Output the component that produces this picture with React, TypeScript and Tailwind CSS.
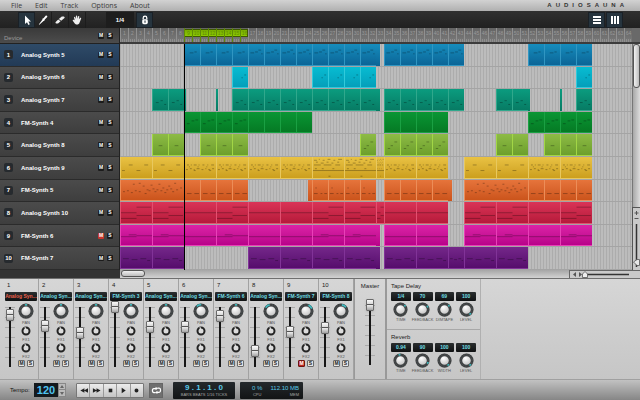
import { useState } from "react";
import clsx from "clsx";

const MEASURES = 64;

type Notes = [number, number, number][];

// note patterns on a 32 x 22 grid: x, y, length
const NOTES: Record<string, Notes> = {
  none: [],
  blue: [[10, 9, 8], [20, 8, 5]],
  blueDense: [[3, 9, 8], [13, 8, 6], [20, 6, 6], [26, 10, 3]],
  cyan: [[24, 8, 4], [18, 11, 3]],
  teal: [[6, 14, 6], [16, 12, 5], [24, 16, 4]],
  green: [[4, 12, 6], [14, 9, 6], [22, 8, 6]],
  lime: [[12, 12, 8]],
  limeDense: [[6, 15, 5], [12, 12, 5], [20, 8, 6]],
  yellow: [[8, 8, 4], [24, 8, 4], [1, 14, 3], [16, 14, 4]],
  yellowDense: [
    [2, 8, 2], [6, 8, 1], [9, 8, 3], [14, 8, 1], [18, 8, 2], [23, 8, 1], [27, 8, 3],
    [1, 13, 2], [5, 12, 2], [9, 13, 1], [12, 12, 3], [17, 13, 2], [21, 12, 1], [24, 13, 2], [28, 12, 2],
    [4, 10, 1], [13, 10, 1], [22, 10, 1], [9, 14, 2], [25, 14, 2],
  ],
  yellowFull: [
    [1, 3, 3], [6, 2, 1], [10, 3, 2], [15, 2, 3], [21, 3, 2], [26, 2, 4],
    [3, 5, 2], [8, 6, 3], [14, 5, 2], [19, 6, 2], [25, 5, 2], [1, 8, 7], [11, 8, 8], [23, 8, 5],
    [2, 12, 2], [9, 12, 2], [20, 12, 2], [0, 14, 32], [16, 20, 2],
  ],
  orange: [[2, 14, 8], [16, 14, 4], [24, 14, 6], [5, 8, 3]],
  orangeLow: [[4, 14, 10], [20, 14, 10]],
  orangeScatter: [
    [1, 12, 1], [3, 11, 1], [5, 13, 1], [6, 4, 1], [7, 11, 1], [9, 3, 1], [9, 12, 1], [11, 6, 1], [12, 14, 1],
    [13, 10, 1], [14, 11, 1], [15, 5, 1], [16, 9, 1], [17, 12, 1], [18, 10, 1], [19, 4, 1], [20, 11, 1],
    [21, 8, 1], [22, 13, 1], [23, 10, 1], [24, 6, 1], [25, 9, 1], [26, 12, 1], [27, 3, 1], [28, 10, 1], [30, 8, 1],
  ],
  red: [[16, 5, 15], [0, 11, 16], [16, 14, 15], [0, 17, 16]],
  redFlat: [[0, 11, 32]],
  magenta: [[8, 10, 8], [0, 12, 16], [16, 11, 8], [24, 11, 8]],
  magentaFlat: [[0, 12, 32]],
  purple: [[2, 12, 6], [11, 13, 6], [20, 12, 6], [27, 14, 3]],
};

// run of clips: first measure, last measure, measures in one clip, notes
type Run = [number, number, number, string];

type Track = {
  name: string;
  color: string;
  muted?: boolean;
  runs: Run[];
};

const TRACKS: Track[] = [
  {
    name: "Analog Synth 5",
    color: "from-[#168dbd] to-[#0b6597] border-[#3096c2]",
    runs: [[8, 16, 2, "blue"], [16, 32.5, 2, "blueDense"], [33, 43, 2, "blueDense"], [51, 59, 2, "blue"]],
  },
  {
    name: "Analog Synth 6",
    color: "from-[#08bcd2] to-[#049fba] border-[#30cadb]",
    runs: [[14, 16, 2, "cyan"], [24, 32, 2, "cyan"], [57, 59, 2, "cyan"]],
  },
  {
    name: "Analog Synth 7",
    color: "from-[#0b9c7f] to-[#077b64] border-[#30a88c]",
    runs: [
      [4, 8, 2, "teal"], [8, 8.25, 1, "none"], [12, 12.25, 1, "none"], [14, 32.5, 2, "teal"],
      [33, 43, 2, "teal"], [47, 51.25, 2, "teal"], [55, 55.25, 1, "none"], [57, 59, 2, "teal"],
    ],
  },
  {
    name: "FM-Synth 4",
    color: "from-[#0a9634] to-[#057a24] border-[#1aa043]",
    runs: [[8, 16, 2, "green"], [16, 24, 2, "none"], [33, 41, 2, "none"], [51, 59, 2, "green"]],
  },
  {
    name: "Analog Synth 8",
    color: "from-[#8dbb45] to-[#6d9f2c] border-[#a2d646]",
    runs: [[4, 8, 2, "lime"], [10, 16, 2, "lime"], [30, 32, 2, "limeDense"], [33, 41, 2, "limeDense"], [47, 51, 2, "lime"], [53, 59, 2, "lime"]],
  },
  {
    name: "Analog Synth 9",
    color: "from-[#e9c243] to-[#cc9f1c] border-[#e8c85e]",
    runs: [
      [0, 8, 4, "yellow"], [8, 24, 4, "yellowDense"], [24, 33, 4, "yellowFull"],
      [33, 41, 4, "yellowDense"], [43, 51, 4, "yellow"], [51, 59, 4, "yellowDense"],
    ],
  },
  {
    name: "FM-Synth 5",
    color: "from-[#e6743b] to-[#cb541b] border-[#ec8d58]",
    runs: [
      [0, 8, 8, "orangeScatter"], [8, 16, 2, "orangeLow"], [23.5, 24, 1, "none"], [24, 32, 2, "orange"],
      [33, 41, 2, "orangeLow"], [41, 41.5, 1, "none"], [43, 51, 8, "orangeScatter"], [51, 59, 2, "orangeLow"],
    ],
  },
  {
    name: "Analog Synth 10",
    color: "from-[#da3357] to-[#b61a3a] border-[#e25070]",
    runs: [
      [0, 8, 4, "red"], [8, 12, 4, "redFlat"], [12, 16, 4, "red"], [16, 24, 4, "redFlat"], [24, 33, 4, "red"],
      [33, 41, 4, "redFlat"], [43, 51, 4, "red"], [51, 55, 4, "redFlat"], [55, 59, 4, "red"],
    ],
  },
  {
    name: "FM-Synth 6",
    color: "from-[#dc22a6] to-[#b8028a] border-[#e840b8]",
    muted: true,
    runs: [
      [0, 8, 4, "magenta"], [8, 12, 4, "magentaFlat"], [12, 16, 4, "magenta"], [16, 24, 4, "magentaFlat"],
      [24, 32.5, 4, "magenta"], [33, 41, 4, "magentaFlat"], [43, 51, 4, "magenta"], [51, 55, 4, "magentaFlat"], [55, 59, 4, "magenta"],
    ],
  },
  {
    name: "FM-Synth 7",
    color: "from-[#75278a] to-[#560c6c] border-[#813398]",
    runs: [[0, 8, 4, "purple"], [16, 32.5, 4, "purple"], [33, 41, 4, "purple"], [41, 43, 2, "purple"], [43, 51, 4, "purple"]],
  },
];

const CHANNELS = [
  { name: "Analog Syn...", level: 85, pan: 0, armed: true },
  { name: "Analog Syn...", level: 65, pan: 0 },
  { name: "Analog Syn...", level: 51, pan: 0 },
  { name: "FM-Synth 3", level: 100, pan: 0 },
  { name: "Analog Syn...", level: 63, pan: 0 },
  { name: "Analog Syn...", level: 63, pan: -20 },
  { name: "FM-Synth 6", level: 83, pan: 0 },
  { name: "Analog Syn...", level: 18, pan: -35 },
  { name: "FM-Synth 7", level: 54, pan: 45, muted: true },
  { name: "FM-Synth 8", level: 61, pan: 30 },
];

const EFFECTS = [
  {
    title: "Tape Delay",
    params: [
      { label: "TIME", value: "1/4", angle: 50 },
      { label: "FEEDBACK", value: "70", angle: 60 },
      { label: "DIMTAPE", value: "69", angle: 50 },
      { label: "LEVEL", value: "100", angle: 140 },
    ],
  },
  {
    title: "Reverb",
    params: [
      { label: "TIME", value: "0.94", angle: -10 },
      { label: "FEEDBACK", value: "90", angle: 115 },
      { label: "WIDTH", value: "100", angle: 140 },
      { label: "LEVEL", value: "100", angle: 140 },
    ],
  },
];

function clipsOf(runs: Run[]) {
  const clips: { start: number; size: number; notes: string }[] = [];
  for (const [from, to, step, notes] of runs) {
    for (let m = from; m < to; m += step) {
      clips.push({ start: m, size: Math.min(step, to - m), notes });
    }
  }
  return clips;
}

function Clip({ start, size, notes, color }: { start: number; size: number; notes: string; color: string }) {
  return (
    <div
      className={clsx("absolute inset-y-0 overflow-hidden bg-linear-to-b", size >= 1 && "border-l border-b", color)}
      style={{ left: `${(start / MEASURES) * 100}%`, width: `${(size / MEASURES) * 100}%` }}
    >
      {size >= 1 && (
        <svg viewBox="0 0 32 22" preserveAspectRatio="none" className="block size-full">
          {NOTES[notes].map(([x, y, w], i) => (
            <rect key={i} x={x} y={y} width={w} height="1" fill="#000" opacity="0.3" />
          ))}
        </svg>
      )}
    </div>
  );
}

function HeaderButton({ label, name, on }: { label: string; name: string; on?: boolean }) {
  return (
    <button
      aria-label={name}
      className={clsx(
        "flex size-[6px] items-center justify-center rounded-[1px] text-[5px] leading-none font-bold text-white",
        on ? "bg-[#c8352c]" : "bg-[#1c1c1c]"
      )}
    >
      {label}
    </button>
  );
}

function Knob({ label, size, angle, arc }: { label: string; size: "lg" | "md" | "sm"; angle: number; arc?: boolean }) {
  return (
    <span
      className={clsx(
        "relative block shrink-0",
        size === "lg" && "size-4",
        size === "md" && "size-[15px]",
        size === "sm" && "size-[10px]"
      )}
    >
      <svg viewBox="0 0 16 16" className="block size-full">
        {size === "sm" ? (
          <>
            <circle cx="8" cy="8" r="5.6" fill="#dcdcdc" stroke="#232323" strokeWidth="3.2" />
            <path d="M8 6V1.6" stroke="#e8e8e8" strokeWidth="1.8" transform={`rotate(${angle} 8 8)`} />
          </>
        ) : (
          <>
            <circle cx="8" cy="8.3" r="7.6" fill="#8a8a8a" />
            <circle cx="8" cy="8" r="6" fill="url(#knobFace)" stroke="#3c3f40" strokeWidth="2.8" />
            <circle cx="8" cy="8" r="6" fill="none" stroke="#8a8d8e" strokeWidth="1.6" strokeDasharray="0.5 1.2" opacity="0.35" />
            <path
              d={arc ? "M5.6 2.2A6.2 6.2 0 0 1 10.4 2.2" : "M7 1.9A6.2 6.2 0 0 1 9 1.9"}
              fill="none"
              stroke="#3fb9bd"
              strokeWidth="1.8"
              transform={`rotate(${angle} 8 8)`}
            />
          </>
        )}
      </svg>
      <input
        type="range"
        aria-label={label}
        min={-150}
        max={150}
        defaultValue={angle}
        className="absolute inset-0 size-full cursor-pointer opacity-0"
      />
    </span>
  );
}

function Fader({ label, value }: { label: string; value: number }) {
  return (
    <input
      type="range"
      aria-label={label}
      defaultValue={value}
      className="h-[66px] w-[10px] shrink-0 cursor-pointer appearance-none bg-transparent bg-[linear-gradient(90deg,transparent_4px,#171717_4px,#171717_6px,transparent_6px),repeating-linear-gradient(180deg,#aaa_0px,#aaa_1px,transparent_1px,transparent_10px)] bg-[length:100%_60px] bg-bottom bg-no-repeat [direction:rtl] [writing-mode:vertical-lr] [&::-webkit-slider-thumb]:h-[12px] [&::-webkit-slider-thumb]:w-[8px] [&::-webkit-slider-thumb]:appearance-none [&::-webkit-slider-thumb]:rounded-[1px] [&::-webkit-slider-thumb]:border [&::-webkit-slider-thumb]:border-[#6a6a6a] [&::-webkit-slider-thumb]:bg-[linear-gradient(180deg,#fafafa_0px,#d8d8d8_4px,#555_4px,#555_5px,#eee_5px,#a4a4a4_10px)] [&::-webkit-slider-thumb]:shadow-sm"
    />
  );
}

function Display({ children, className }: { children: React.ReactNode; className?: string }) {
  return (
    <output
      className={clsx(
        "block overflow-hidden rounded-[1px] bg-linear-to-b from-[#2b2f30] to-[#101213] text-center text-[5px] leading-[9px] font-bold whitespace-nowrap text-[#6fdfe4]",
        className
      )}
    >
      {children}
    </output>
  );
}

function StripButton({ label, name, on }: { label: string; name: string; on?: boolean }) {
  return (
    <button
      aria-label={name}
      className={clsx(
        "flex size-[7px] items-center justify-center rounded-[1px] border text-[5px] leading-none font-bold",
        on ? "border-[#6e1511] bg-[#c02a20] text-white" : "border-[#6b6b6b] bg-[#e4e4e4] text-[#222]"
      )}
    >
      {label}
    </button>
  );
}

function MenuBar() {
  return (
    <header className="flex h-[11px] shrink-0 items-center justify-between bg-linear-to-b from-[#d2d2d2] to-[#b0b0b0] pr-3 pl-[11px]">
      <nav className="flex gap-[13px] font-['Open_Sans',sans-serif] text-[7px] leading-[11px] text-[#3c3c3c]">
        {["File", "Edit", "Track", "Options", "About"].map((item) => (
          <a key={item} href="#">{item}</a>
        ))}
      </nav>
      <span className="text-[6px] leading-[11px] font-bold tracking-[4px] text-[#333]">AUDIOSAUNA</span>
    </header>
  );
}

const TOOL = "flex h-[16px] w-[17px] items-center justify-center border-r border-[#1c1c1c] bg-linear-to-b from-[#303030] to-[#202020]";
const TOOL_ON = "flex h-[16px] w-[17px] items-center justify-center border border-[#1a2026] bg-[#26343e]";

function Toolbar() {
  const [tool, setTool] = useState("Select");
  const icons = [
    { name: "Select", art: <path d="M3 0.5V9L5 7.2L6.4 10L7.8 9.3L6.4 6.6H9Z" fill="#fff" /> },
    { name: "Draw", art: <path d="M0.8 9.4L4.5 4.6L5.8 5.8L1.3 9.8ZM4.6 3.6L5.5 3.3L7.6 0.8C8.6 0 10 1.3 9 2.3L6.8 4.4L6.5 5.6L5.8 5.9L4.3 4.3Z" fill="#fff" /> },
    { name: "Erase", art: <path d="M0.4 7.2L3.2 4.6L5.6 6.2L3 8.6H0.9ZM3.8 4L6.8 1.6H9L9.8 2.8L6.2 5.7Z" fill="#eee" /> },
    { name: "Pan", art: <path d="M2.6 5.2L2 2.4C1.9 1.5 3 1.4 3.2 2.2L3.8 4L3.9 1.2C3.9 0.3 5.1 0.3 5.2 1.2L5.4 3.8L6.1 1.5C6.4 0.7 7.5 1 7.3 1.9L6.9 4.3L8 3C8.6 2.3 9.5 2.9 9.1 3.7L7.6 7.6C7.2 9 6.3 9.6 5 9.6C3.6 9.6 2.9 9 2.2 7.8L0.8 5.8C0.4 5 1.3 4.4 1.9 4.9Z" fill="#eee" /> },
  ];

  return (
    <div className="flex h-[17px] shrink-0 items-center bg-linear-to-b from-[#303030] to-[#212121] pr-[17px] pl-[18px]">
      {icons.map(({ name, art }) => (
        <button key={name} aria-label={name} onClick={() => setTool(name)} className={tool === name ? TOOL_ON : TOOL}>
          <svg viewBox="0 0 10 10" className="size-[10px]">{art}</svg>
        </button>
      ))}
      <select
        aria-label="Snap"
        className="ml-5 h-[16px] w-[28px] appearance-none bg-[#1d1d1d] text-center text-[6px] leading-[16px] font-bold text-white"
      >
        <option>1/4</option>
        <option>1/8</option>
      </select>
      <button aria-label="Lock" className={clsx(TOOL_ON, "ml-[2px]")}>
        <svg viewBox="0 0 10 10" className="size-[10px]">
          <path d="M3.2 4.5V3C3.2 0.6 6.8 0.6 6.8 3V4.5" fill="none" stroke="#fff" strokeWidth="1.3" />
          <rect x="2.2" y="4.2" width="5.6" height="5" rx="1.6" fill="#fff" />
          <path d="M5 5.6V7.8" stroke="#26343e" strokeWidth="1.1" />
        </svg>
      </button>
      <div className="ml-auto flex">
        <button aria-label="List view" className={TOOL_ON}>
          <svg viewBox="0 0 10 10" className="size-[10px]">
            <path d="M1 2H9M1 5H9M1 8H9" stroke="#fff" strokeWidth="2" />
          </svg>
        </button>
        <button aria-label="Mixer view" className={clsx(TOOL_ON, "ml-px")}>
          <svg viewBox="0 0 10 10" className="size-[10px]">
            <path d="M2 1V9M5 1V9M8 1V9" stroke="#fff" strokeWidth="2" />
          </svg>
        </button>
      </div>
    </div>
  );
}

function TrackList() {
  return (
    <div className="flex w-[120px] shrink-0 flex-col border-r border-[#222] bg-[#333]">
      <div className="flex h-4 shrink-0 items-center gap-[3px] border-b border-[#222] bg-linear-to-b from-[#3a3a3a] to-[#4c4c4c] pr-[6px] pl-1">
        <span className="mr-auto pt-1 text-[6px] leading-[8px] text-[#999]">Device</span>
        <HeaderButton label="M" name="Mute all" />
        <HeaderButton label="S" name="Solo all" />
      </div>
      {TRACKS.map((track, i) => (
        <div
          key={track.name}
          className={clsx(
            "flex flex-1 items-center gap-[3px] border-b border-[#2b2b2b] bg-linear-to-b pr-[6px] pl-1",
            i === 0 ? "from-[#2f4b68] to-[#223a56]" : "from-[#4b4b4b] to-[#3e3e3e]"
          )}
        >
          <span className="flex size-[9px] items-center justify-center rounded-[2px] bg-[#262a2e] text-[6px] leading-none font-bold text-white">
            {i + 1}
          </span>
          <span className="mr-auto pl-[5px] text-[6px] leading-[8px] font-bold whitespace-nowrap text-white">{track.name}</span>
          <HeaderButton label="M" name={`Mute ${track.name}`} on={track.muted} />
          <HeaderButton label="S" name={`Solo ${track.name}`} />
        </div>
      ))}
    </div>
  );
}

function Timeline() {
  return (
    <div className="flex min-w-0 flex-1 flex-col">
      <div className="relative grid h-4 shrink-0 grid-cols-[repeat(64,minmax(0,1fr))] border-b-2 border-[#3c3c3c] bg-linear-to-b from-[#646464] to-[#7a7a7a]">
        <div
          className="absolute top-px h-[8px] border border-[#3f5a00] bg-linear-to-b from-[#78ae00] to-[#8ccb00]"
          style={{ left: `${(8 / MEASURES) * 100}%`, width: `${(8 / MEASURES) * 100}%` }}
        />
        {Array.from({ length: MEASURES }, (_, i) => (
          <span
            key={i}
            className={clsx(
              "relative overflow-hidden border-l bg-[repeating-linear-gradient(90deg,transparent_0px,transparent_1px,#8e8e8e_1px,#8e8e8e_2px)] bg-[length:100%_3px] bg-bottom bg-no-repeat text-center text-[5px] leading-[10px]",
              i >= 8 && i < 16 ? "border-[#5f8a08] text-[#5f8a08]" : "border-[#909090] text-[#999]"
            )}
          >
            {i + 1}
          </span>
        ))}
      </div>
      <div className="relative flex flex-1 flex-col bg-[#bcbcbc] bg-[repeating-linear-gradient(90deg,#acacac_0px,#acacac_1px,#bcbcbc_1px,#bcbcbc_3px)]">
        {TRACKS.map((track) => (
          <div key={track.name} className="relative flex-1 border-b border-[#a4a4a4]">
            {clipsOf(track.runs).map((clip) => (
              <Clip key={clip.start} {...clip} color={track.color} />
            ))}
          </div>
        ))}
        <div className="absolute inset-y-0 w-px bg-black" style={{ left: `${(8 / MEASURES) * 100}%` }} />
      </div>
    </div>
  );
}

function VerticalScroll() {
  return (
    <div className="flex w-2 shrink-0 flex-col">
      <div className="h-4 shrink-0 border-b-2 border-[#3c3c3c] bg-[#696969]" />
      <div className="flex-1 border-l border-[#777] bg-linear-to-r from-[#a8a8a8] to-[#dcdcdc]">
        <div className="h-[44px] rounded-[3px] border border-[#555] bg-linear-to-r from-[#f2f2f2] to-[#bdbdbd]" />
      </div>
      <div className="flex h-[63px] shrink-0 flex-col items-center border-t border-l border-[#555] bg-[#c9c9c9]">
        <svg viewBox="0 0 7 62" className="h-[62px] w-[7px]">
          <path d="M3.5 3V7M1.5 5H5.5M1.5 10.5H5.5" stroke="#555" />
          <path d="M3.5 16V59" stroke="#333" strokeWidth="1.5" />
          <path d="M0.5 54L4 51.5H6.5V57.5H4Z" fill="#e8e8e8" stroke="#555" strokeWidth="0.8" />
        </svg>
      </div>
    </div>
  );
}

function HorizontalScroll() {
  return (
    <div className="flex h-2 shrink-0">
      <div className="w-[120px] shrink-0 bg-[#333]" />
      <div className="flex-1 bg-linear-to-b from-[#a6a6a6] to-[#d2d2d2] px-px">
        <div className="h-[7px] w-6 rounded-[3px] border border-[#555] bg-linear-to-b from-[#f0f0f0] to-[#bcbcbc]" />
      </div>
      <div className="w-[71px] shrink-0 border-t border-l border-[#666] bg-[#cacaca]">
        <svg viewBox="0 0 70 7" className="h-[7px] w-[70px]">
          <path d="M6 1V6L3 3.5ZM9 1L12 3.5L9 6Z" fill="#555" />
          <path d="M14 3.5H59" stroke="#333" strokeWidth="1.5" />
          <path d="M15 0.5L17.5 3V6.5H12.5V3Z" fill="#eee" stroke="#555" strokeWidth="0.8" />
        </svg>
      </div>
    </div>
  );
}

function ChannelStrip({ index }: { index: number }) {
  const channel = CHANNELS[index];
  const id = `Channel ${index + 1}`;
  return (
    <section className="w-[35px] shrink-0 border-r border-[#a2a2a2] px-px pt-px">
      <h3 className="pl-[2px] text-[6px] leading-[10px] text-[#222]">{index + 1}</h3>
      <Display className={clsx("mt-[2px]", channel.armed && "text-[#e8604c]!")}>{channel.name}</Display>
      <div className="flex">
        <Fader label={`${id} volume`} value={channel.level} />
        <div className="flex flex-1 flex-col items-center gap-px pt-[2px] text-[4px] leading-[5px] text-[#555]">
          <Knob label={`${id} pan`} size="lg" angle={channel.pan} arc={channel.pan !== 0} />
          <span>PAN</span>
          <Knob label={`${id} FX1`} size="sm" angle={-15} />
          <span>FX1</span>
          <Knob label={`${id} FX2`} size="sm" angle={-15} />
          <span>FX2</span>
          <div className="flex gap-[2px]">
            <StripButton label="M" name={`Mute channel ${index + 1}`} on={channel.muted} />
            <StripButton label="S" name={`Solo channel ${index + 1}`} />
          </div>
        </div>
      </div>
    </section>
  );
}

function Mixer() {
  return (
    <main className="flex h-[101px] shrink-0 border-t border-[#6f6f6f] bg-linear-to-b from-[#d6d6d6] to-[#c6c6c6] pl-1">
      {CHANNELS.map((_, i) => (
        <ChannelStrip key={i} index={i} />
      ))}
      <section className="flex w-[33px] shrink-0 flex-col items-center border-r-2 border-l border-r-[#999] border-l-[#999] pt-[2px]">
        <h3 className="text-[6px] leading-[10px] text-[#222]">Master</h3>
        <div className="mt-2">
          <Fader label="Master volume" value={100} />
        </div>
      </section>
      <div className="flex w-[94px] shrink-0 flex-col border-r border-[#b0b0b0]">
        {EFFECTS.map((fx) => (
          <section key={fx.title} className="flex-1 border-b border-[#a8a8a8] px-1 pt-[2px] last:border-b-0">
            <h3 className="text-[6px] leading-[11px] text-[#222]">{fx.title}</h3>
            <div className="grid grid-cols-4 gap-[2px] text-[4px] leading-[5px] text-[#555]">
              {fx.params.map((param) => (
                <div key={param.label} className="flex min-w-0 flex-col items-center">
                  <Display className="mb-px w-full">{param.value}</Display>
                  <Knob label={`${fx.title} ${param.label}`} size="md" angle={param.angle} />
                  <span>{param.label}</span>
                </div>
              ))}
            </div>
          </section>
        ))}
      </div>
    </main>
  );
}

function Transport() {
  const buttons = [
    { name: "Rewind", d: "M6 2.5V7.5L1.5 5ZM10 2.5V7.5L5.5 5Z" },
    { name: "Forward", d: "M1 2.5V7.5L5.5 5ZM5 2.5V7.5L9.5 5Z" },
    { name: "Stop", d: "M3 3H7V7H3Z" },
    { name: "Play", d: "M3 2L7.5 5L3 8Z" },
    { name: "Record", d: "M5 2.8A2.2 2.2 0 1 0 5 7.2A2.2 2.2 0 1 0 5 2.8Z" },
  ];
  return (
    <footer className="flex h-[21px] shrink-0 items-center border-t border-[#a0a0a0] bg-linear-to-b from-[#c2c2c2] to-[#868686] pl-[10px]">
      <label htmlFor="tempo" className="w-6 text-[6px] leading-[10px] whitespace-nowrap text-[#111]">Tempo:</label>
      <input
        id="tempo"
        defaultValue="120"
        className="h-[14px] w-6 bg-[#14191d] text-center text-[11px] leading-[14px] font-bold text-[#4fc3f0]"
      />
      <div className="flex w-2 flex-col border border-[#888] bg-[#bbb]">
        <button aria-label="Faster" className="flex h-[6px] items-center justify-center border-b border-[#888]">
          <svg viewBox="0 0 4 3" className="h-[3px] w-1"><path d="M0 3L2 0L4 3Z" fill="#666" /></svg>
        </button>
        <button aria-label="Slower" className="flex h-[6px] items-center justify-center">
          <svg viewBox="0 0 4 3" className="h-[3px] w-1"><path d="M0 0L2 3L4 0Z" fill="#666" /></svg>
        </button>
      </div>
      <div className="ml-[10px] flex w-[68px] rounded-[1px] border border-[#777]">
        {buttons.map(({ name, d }) => (
          <button
            key={name}
            aria-label={name}
            className="flex h-[13px] flex-1 items-center justify-center border-r border-[#999] bg-linear-to-b from-[#ececec] to-[#c4c4c4] last:border-r-0"
          >
            <svg viewBox="0 0 10 10" className="size-[9px]"><path d={d} fill="#222" /></svg>
          </button>
        ))}
      </div>
      <button aria-label="Loop" className="ml-[5px] flex h-[15px] w-[14px] items-center justify-center border border-[#666] bg-[#6f6f6f]">
        <svg viewBox="0 0 12 10" className="h-[9px] w-[11px]">
          <path d="M7 2.4H9C11 2.4 11 7 9 7H6.5M5 7.4H3C1 7.4 1 2.8 3 2.8H5.5" fill="none" stroke="#fff" strokeWidth="1.4" />
          <path d="M5 0.8L7.6 2.7L5 4.6ZM7 5.2L4.4 7.1L7 9Z" fill="#fff" />
        </svg>
      </button>
      <div className="ml-[10px] flex h-[17px] w-[62px] flex-col items-center justify-center rounded-[1px] bg-linear-to-b from-[#24292c] to-[#121415]">
        <output className="text-[8px] leading-[9px] font-bold text-[#59c8e8]">9 . 1 . 1 . 0</output>
        <span className="text-[4px] leading-[5px] text-[#a5a5a5]">BARS BEATS 1/16 TICKS</span>
      </div>
      <div className="ml-[5px] flex h-[17px] w-[63px] items-center justify-between rounded-[1px] bg-linear-to-b from-[#24292c] to-[#121415] pr-1 pl-3 text-[6px] leading-[8px] text-[#59c8e8]">
        <span className="flex flex-col items-center">
          <output>0 %</output>
          <span className="text-[4px] leading-[5px] text-[#a5a5a5]">CPU</span>
        </span>
        <span className="flex flex-col items-end">
          <output>112.10 MB</output>
          <span className="text-[4px] leading-[5px] text-[#a5a5a5]">MEM</span>
        </span>
      </div>
    </footer>
  );
}

export default function App() {
  return (
    <div className="flex h-screen flex-col overflow-hidden bg-[#c9c9c9] font-['Liberation_Sans',Arial,sans-serif]">
      <svg className="absolute size-0" aria-hidden="true">
        <defs>
          <radialGradient id="knobFace" cx="0.4" cy="0.3" r="0.8">
            <stop offset="0" stopColor="#fff" />
            <stop offset="1" stopColor="#b4b4b4" />
          </radialGradient>
        </defs>
      </svg>
      <MenuBar />
      <Toolbar />
      <div className="flex min-h-0 flex-1">
        <TrackList />
        <Timeline />
        <VerticalScroll />
      </div>
      <HorizontalScroll />
      <Mixer />
      <Transport />
    </div>
  );
}
